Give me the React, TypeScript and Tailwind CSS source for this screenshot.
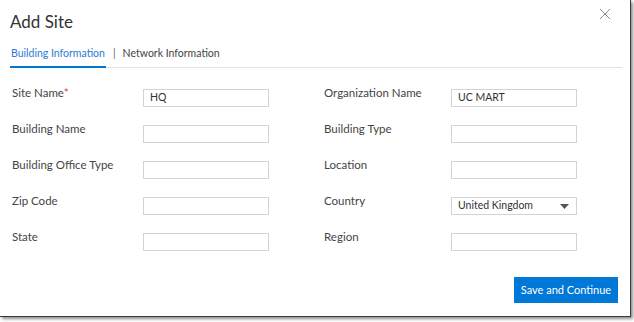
import React from "react";

const font = { fontFamily: 'Lato, "Noto Sans", Arial, sans-serif' };

function Field({ label, value, required, select, lw }: { label: string; value?: string; required?: boolean; select?: boolean; lw: string }) {
  return (
    <div className="flex h-[18px] items-start">
      <div className={`${lw} shrink-0 -mt-[3px] text-[11.5px] leading-[14px] text-[#444]`}>
        {label}
        {required && <span className="text-[#e03a3a]">*</span>}
      </div>
      <div className="relative flex h-[18px] w-[126px] items-center border border-[#d2d2d2] bg-white pl-[6px] text-[10.5px] text-[#333]">
        {value}
        {select && (
          <svg className="absolute right-[7px] top-[6px]" width="9" height="5" viewBox="0 0 9 5">
            <path d="M0 0 L9 0 L4.5 5 Z" fill="#555" />
          </svg>
        )}
      </div>
    </div>
  );
}

export default function App() {
  return (
    <div className="h-[322px] w-[634px] overflow-hidden bg-white" style={font}>
      <div className="relative h-[317px] w-[631px] border-b border-r border-[#3a3a3a] bg-white shadow-[2px_2px_3px_rgba(0,0,0,0.45)]">
        <div className="px-[10px] pt-[10px] text-[17px] leading-[24px] text-[#333]">Add Site</div>
        <button className="absolute right-[19px] top-[8px] p-0" aria-label="Close">
          <svg width="12" height="12" viewBox="0 0 12 12">
            <path d="M1 1 L11 11 M11 1 L1 11" stroke="#8a8a8a" strokeWidth="1" fill="none" />
          </svg>
        </button>
        <div className="ml-[10px] mr-[8px] mt-[12px] flex items-end border-b border-[#e3e3e3] text-[10.5px] leading-[14px]">
          <div className="-mb-px border-b-2 border-[#0078d4] pb-[6px] pl-px pr-[1px] text-[#2b7cd3]">Building Information</div>
          <div className="pb-[7px] pl-[7px] pr-[7px] text-[#666]">|</div>
          <div className="pb-[7px] text-[#444]">Network Information</div>
        </div>
        <div className="ml-[12px] mt-[21px] grid grid-cols-[312px_1fr] gap-y-[18px]">
          <Field lw="w-[131px]" label="Site Name" required value="HQ" />
          <Field lw="w-[127px]" label="Organization Name" value="UC MART" />
          <Field lw="w-[131px]" label="Building Name" />
          <Field lw="w-[127px]" label="Building Type" />
          <Field lw="w-[131px]" label="Building Office Type" />
          <Field lw="w-[127px]" label="Location" />
          <Field lw="w-[131px]" label="Zip Code" />
          <Field lw="w-[127px]" label="Country" value="United Kingdom" select />
          <Field lw="w-[131px]" label="State" />
          <Field lw="w-[127px]" label="Region" />
        </div>
        <div className="mr-[12px] mt-[26px] flex justify-end">
          <button className="h-[26px] w-[104px] whitespace-nowrap bg-[#0078d7] text-[11px] text-white">Save and Continue</button>
        </div>
      </div>
    </div>
  );
}
